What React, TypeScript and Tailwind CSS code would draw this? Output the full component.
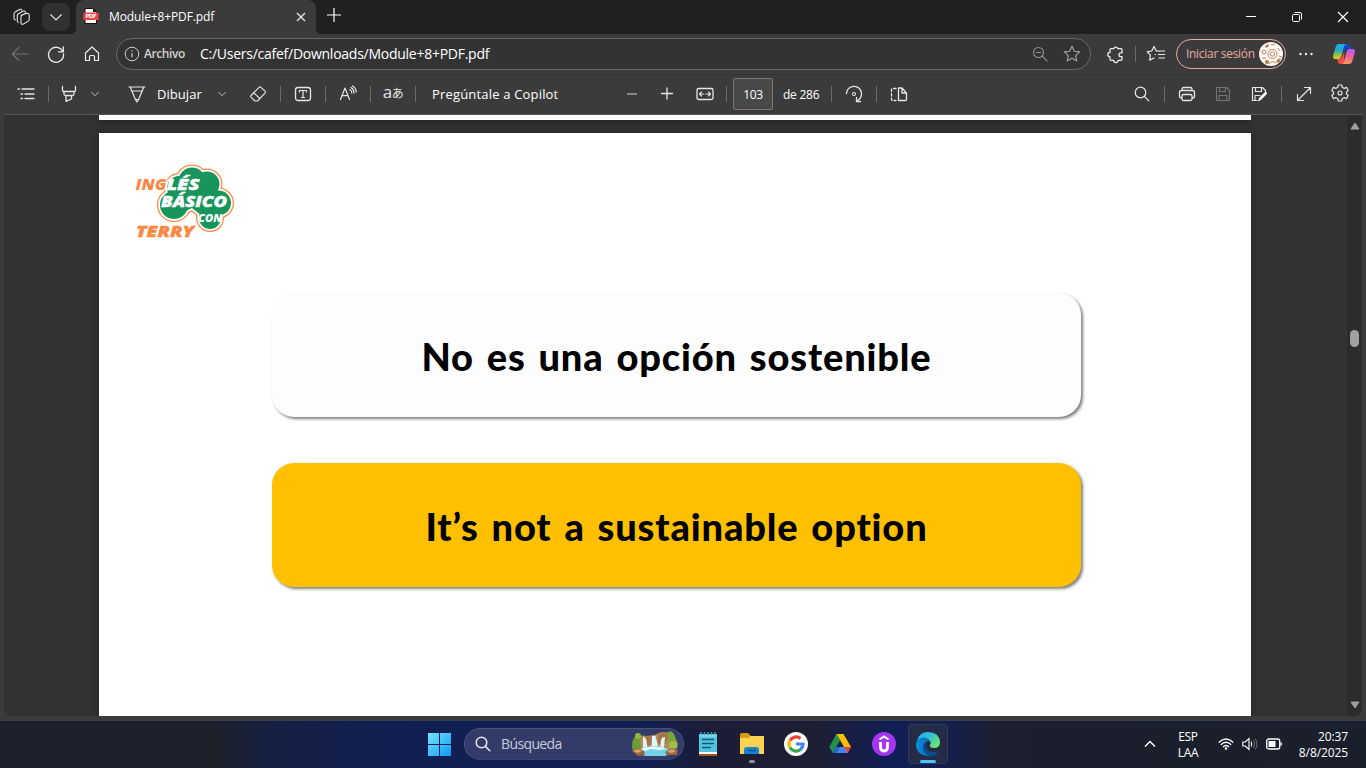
import React from "react";

type IconProps = { children: React.ReactNode; className?: string; box?: string };

function Icon({ children, className = "", box = "0 0 20 20" }: IconProps) {
  return (
    <svg viewBox={box} fill="none" stroke="currentColor" strokeWidth="1.1" strokeLinecap="round" strokeLinejoin="round" className={`block h-5 w-5 shrink-0 ${className}`}>
      {children}
    </svg>
  );
}

function Sep({ className = "ml-3" }: { className?: string }) {
  return <div className={`h-4 w-px shrink-0 bg-[#6b6b6b] ${className}`} />;
}

function Chevron({ className = "" }: { className?: string }) {
  return (
    <svg viewBox="0 0 10 10" fill="none" stroke="currentColor" strokeWidth="1" className={`block h-2.5 w-2.5 shrink-0 text-[#c4c4c4] ${className}`}>
      <path d="M1.5 3.2 5 6.7 8.500 3.200" />
    </svg>
  );
}

function TitleBar() {
  return (
    <div className="flex h-[34px] shrink-0 items-center bg-[#202020] text-white">
      <Icon className="ml-3 text-[#e6e6e6]">
        <path d="M9 8.200 14.200 6.500q3-.7 3 1.800v4.200q0 1-1 1.600L11.500 17q-2.500 1-2.500-1.200V9.800q0-1 1-1.600l4-2.200" />
        <path d="M6.500 15.500q-1.200-.2-1.200-1.800V8.500q0-1 1-1.700l4.700-2.600q2-.8 2.300 1" />
        <path d="M3.500 13Q2 12.800 2 11V6.800q0-1 1-1.700L7.500 2.500q1.800-.8 2.300.8" />
      </Icon>
      <div className="ml-2.5 flex h-7 w-7 items-center justify-center rounded-lg bg-[#313131]">
        <svg viewBox="0 0 14 14" className="h-3.5 w-3.5" fill="none" stroke="#e6e6e6" strokeWidth="1.2"><path d="m1.500 4.500 5.500 5.500 5.500-5.500" /></svg>
      </div>
      <svg viewBox="0 0 6 6" className="h-1.5 w-1.5 self-end"><path d="M0 6Q6 6 6 0V6Z" fill="#3b3b3b" /></svg>
      <div className="flex h-[34px] w-[240px] items-center rounded-t-lg bg-[#3b3b3b]">
        <svg viewBox="0 0 16 16" className="-mt-0.5 ml-[7px] h-4 w-4">
          <path d="M2 .5h8.500l3 3V15.500H2Z" fill="#fff" stroke="#111" />
          <path d="M10 .5v3.500h3.500Z" fill="#111" />
          <rect x=".5" y="4.500" width="15" height="7.500" rx=".6" fill="#f04346" />
          <text x="8" y="10.400" textAnchor="middle" fontSize="5.500" fontWeight="700" fontFamily="DejaVu Sans" fill="#fff" textLength="11">PDF</text>
        </svg>
        <span className="ml-[10px] w-[170px] whitespace-nowrap text-[12px] leading-4 tracking-[-0.12px]">Module+8+PDF.pdf</span>
        <svg viewBox="0 0 12 12" className="-mt-px ml-[16px] h-3 w-3" stroke="#e8e8e8" strokeWidth="1.300"><path d="m2 2 8 8M10 2l-8 8" /></svg>
      </div>
      <svg viewBox="0 0 6 6" className="h-1.5 w-1.5 self-end"><path d="M6 6Q0 6 0 0V6Z" fill="#3b3b3b" /></svg>
      <svg viewBox="0 0 14 14" className="-mt-1 ml-[5px] h-3.5 w-3.5" stroke="#fff" strokeWidth="1.200"><path d="M7 0v14M0 7h14" /></svg>
      <div className="ml-auto flex items-center">
        <svg viewBox="0 0 12 12" className="mr-[34px] h-3 w-3" stroke="#fff"><path d="M1 5.500h10" /></svg>
        <svg viewBox="0 0 12 12" className="mr-[34px] h-3 w-3" fill="none" stroke="#fff"><rect x="1.500" y="3.500" width="7" height="7" rx="1" /><path d="M3.500 1.500H9a1.500 1.500 0 0 1 1.500 1.500v5.500" /></svg>
        <svg viewBox="0 0 12 12" className="mr-[17px] h-3 w-3" stroke="#fff" strokeWidth="1.200"><path d="m1 1 10 10M11 1 1 11" /></svg>
      </div>
    </div>
  );
}

function CopilotLogo() {
  return (
    <svg viewBox="0 0 24 24" className="ml-4 h-6 w-6 shrink-0">
      <defs>
        <linearGradient id="cpA" x1="0" y1="0" x2="0" y2="1"><stop offset="0" stopColor="#18b4f3" /><stop offset=".4" stopColor="#27a5c8" /><stop offset=".75" stopColor="#8dc63f" /><stop offset="1" stopColor="#f5cf1e" /></linearGradient>
        <linearGradient id="cpB" x1=".6" y1="0" x2=".4" y2="1"><stop offset="0" stopColor="#b35df5" /><stop offset=".5" stopColor="#ef5f9c" /><stop offset="1" stopColor="#fb9a55" /></linearGradient>
      </defs>
      <path d="M10 2h5.500q2 0 2.600 2l1 3.500h-4.500q-2.500 0-3 2.500Z" fill="#1647c8" />
      <path d="M6.500 2H14q-1.500.4-2 2.500L9.500 14q-.8 3-3.500 3H3.500Q.4 17 1.200 13.500L3.600 5Q4.400 2 6.500 2Z" fill="url(#cpA)" />
      <path d="M12 22H8.500q-2 0-2.600-2L5 17h2q2.500 0 3.300-3l2-4Z" fill="#f34a4e" />
      <path d="M17.500 22H10q1.500-.4 2-2.500l2.500-9.500q.8-3 3.500-3h2.500q3.100 0 2.300 3.500L20.400 19q-.8 3-2.900 3Z" fill="url(#cpB)" />
    </svg>
  );
}

function NavBar() {
  return (
    <div className="flex h-10 shrink-0 items-center bg-[#3b3b3b] text-[#ededed]">
      <Icon className="ml-2.5 text-[#737373]"><path d="M18 10H2.500M9 3.500 2.300 10 9 16.500" /></Icon>
      <Icon className="ml-4"><path d="M16.800 7.500A7.500 7.500 0 1 0 17.500 10M17.300 3v4.800h-4.800" strokeWidth="1.300" /></Icon>
      <Icon className="ml-4"><path d="M3.500 9 10 3l6.500 6v7.500h-4v-4q0-1-1-1h-3q-1 0-1 1v4h-4Z" strokeWidth="1.200" /></Icon>
      <div className="ml-[14px] flex h-8 w-[975px] shrink-0 items-center rounded-full border border-[#686868] bg-[#333333]">
        <svg viewBox="0 0 16 16" className="ml-[7px] h-4 w-4" fill="none" stroke="#d0d0d0"><circle cx="8" cy="8" r="6.800" /><path d="M8 7.200v4M8 4.500v1.200" strokeWidth="1.200" /></svg>
        <span className="ml-1 w-[42px] whitespace-nowrap text-[12px] font-semibold leading-4 tracking-[-0.4px] text-[#d0d0d0]">Archivo</span>
        <span className="ml-[14px] whitespace-nowrap text-[14px] leading-5 tracking-[-0.26px] text-white">C:/Users/cafef/Downloads/Module+8+PDF.pdf</span>
        <Icon className="ml-auto mr-3 text-[#929292]"><circle cx="8.500" cy="8.500" r="5" /><path d="m12.200 12.200 4.800 4.800M6.200 8.500h4.600" /></Icon>
        <Icon className="mr-2 text-[#a5a5a5]"><path d="m10 2.200 2.300 5 5.400.7-4 3.700 1 5.400-4.700-2.700L5.300 17l1-5.400-4-3.700 5.400-.7Z" /></Icon>
      </div>
      <Icon className="ml-[14px]"><path d="M6 4.700h2.700a2.200 2.200 0 0 1 4.200 0H16q1 0 1 1v3.100h-1.200a1.900 1.900 0 0 0 0 3.800H17v2.700q0 1-1 1h-2.800a2.200 2.200 0 0 1-4.500 0H6q-1 0-1-1v-2.500a2.200 2.200 0 0 1 0-4.400V5.700q0-1 1-1Z" strokeWidth="1.300" /></Icon>
      <Sep className="ml-2.5" />
      <Icon className="ml-2.5"><path d="M13 7.200 10.300 7 8 2.500 5.700 7l-4.500.8 3.200 3.400-.7 5L8 14M12 7h6.500M12.500 10.500h6M13 14h5.500M9.500 10.500h-.2" strokeWidth="1.200" /></Icon>
      <div className="ml-2.5 flex h-[30px] w-[110px] shrink-0 items-center rounded-full border border-[#e8aaa6] text-[#e8aaa6]">
        <span className="ml-[9px] w-[69px] whitespace-nowrap text-[12px] leading-4 tracking-[-0.3px]">Iniciar sesión</span>
        <svg viewBox="0 0 24 24" className="ml-1 h-6 w-6 shrink-0">
          <circle cx="12" cy="12" r="12" fill="#fbf8f5" />
          <g fill="none" stroke="#bd8960" strokeWidth="1"><circle cx="13.500" cy="12" r="4.500" /><circle cx="13.500" cy="12" r="2.200" /><circle cx="5" cy="10" r="2" /><path d="M12 2q2 2 4 0M19 6l2 3M3 16q3-1 4 1M20 14l3 1M10 22q3-4 7-1" /></g>
          <g fill="#b87842"><circle cx="8" cy="20" r="2" /><path d="m6 4 3-2 1 2-3 2ZM19 17l3-1-2 5-3-1Z" /></g>
        </svg>
      </div>
      <Icon className="ml-2.5"><g fill="currentColor" stroke="none"><circle cx="4.500" cy="10" r="1.200" /><circle cx="10" cy="10" r="1.200" /><circle cx="15.500" cy="10" r="1.200" /></g></Icon>
      <CopilotLogo />
    </div>
  );
}

function PdfToolbar() {
  return (
    <div className="flex h-[41px] shrink-0 items-center rounded-t-lg border-b border-t border-b-[#555555] border-t-[#343434] bg-[#3b3b3b] pb-px text-[14px] leading-5 text-[#e6e6e6]">
      <Icon className="ml-3"><path d="M6 5h12M9 10h9M9 14.500h9M2 5h1.500M5 10h1.500M5 14.500h1.500" strokeWidth="1.300" /></Icon>
      <Sep />
      <Icon className="ml-2.5"><path d="M3.500 2.500v4q0 1 1 1h11q1 0 1-1v-4M5 7.500V10q0 1.500 1.500 1.500h7Q15 11.500 15 10V7.500M7 11.500v5.800l5.500-2.300v-3.500" strokeWidth="1.300" /></Icon>
      <Chevron className="ml-[11px]" />
      <Icon className="ml-[27px]"><path d="M2 3h16M3.200 3l5.200 12.500h3.200L16.800 3M4.700 7h10.600M8.400 15.500 10 18l1.600-2.500" strokeWidth="1.200" /></Icon>
      <span className="ml-2.5 w-[45px] whitespace-nowrap text-[13px] tracking-[0.05px] text-white">Dibujar</span>
      <Chevron className="ml-[15px]" />
      <Icon className="ml-[21px]"><path d="M3 11.500 11 3.300q1-.9 2 0L17 7.200q.9 1 0 2L9.500 17H7l-4-3.800q-.8-.8 0-1.700ZM5.800 8.800l6 5.700" /></Icon>
      <Sep />
      <Icon className="ml-3"><rect x="2.500" y="3.500" width="15" height="13" rx="2.500" strokeWidth="1.300" /><path d="M6.500 8V6.500h7V8M10 6.500v7M8.500 13.500h3" strokeWidth="1.200" /></Icon>
      <Sep />
      <Icon className="ml-3"><path d="m2.500 15.500 4.500-11.500L11.500 15.500M4 11.700h6M11.800 5.500q2 1.300 2 3.500M13 3.500q2.800 1.700 3 5.500M14.500 2q3.500 2 3.700 6" strokeWidth="1.200" /></Icon>
      <Sep />
      <div className="ml-3 flex w-5 shrink-0 items-center justify-center whitespace-nowrap text-[17px] tracking-[-0.5px]"><span className="-mt-1">a</span><span className="text-[12px]">あ</span></div>
      <Sep />
      <span className="ml-4 w-[126px] whitespace-nowrap text-[13px] tracking-[0.18px] text-white">Pregúntale a Copilot</span>
      <Icon className="ml-16 text-[#b0b0b0]"><path d="M5 10h10" strokeLinecap="butt" strokeWidth="1.300" /></Icon>
      <Icon className="ml-[15px]"><path d="M4.500 9.500h11M10 4v11" strokeWidth="1.300" /></Icon>
      <Icon className="ml-[18px]"><rect x="2" y="4.500" width="16" height="11" rx="1.800" strokeWidth="1.300" /><path d="M4.500 10H9M11 10h4.500M6.500 8l-2 2 2 2M13.500 8l2 2-2 2" /></Icon>
      <Sep className="ml-[11px]" />
      <div className="ml-1.5 flex h-8 w-10 shrink-0 items-center justify-center rounded-xs border border-[#777777] bg-[#484848] pt-px text-[12px] tracking-[-0.4px] text-white">103</div>
      <span className="ml-2.5 w-9 whitespace-nowrap pt-px text-[12px] tracking-[-0.25px] text-white">de 286</span>
      <Sep />
      <Icon className="ml-3"><path d="M2.500 9.500a7.500 7.500 0 1 1 11.500 6.700M12.500 13.500v4h4" strokeWidth="1.300" /><circle cx="10" cy="10" r="1.500" /></Icon>
      <Sep />
      <Icon className="ml-3"><path d="M9.500 4v12.500h7q1 0 1-1V9l-4.500-5Zm3.500 0v5h4.500" strokeWidth="1.300" /><path d="M7 4.500H3.500q-1 0-1 1v10q0 1 1 1H7" strokeDasharray="2.500 2" strokeWidth="1.300" /></Icon>
      <Icon className="ml-auto"><circle cx="8.500" cy="8.500" r="5.300" strokeWidth="1.200" /><path d="m12.500 12.500 4.300 4.300" strokeWidth="1.200" /></Icon>
      <Sep />
      <Icon className="ml-3"><path d="M5 6.500V5q0-1.500 1.500-1.500h7Q15 3.500 15 5v1.500M5 14h-.5q-2 0-2-2V8.500q0-2 2-2h11q2 0 2 2V12q0 2-2 2H15M6.500 10.500h7Q15 10.500 15 12v3q0 1.500-1.500 1.500h-7Q5 16.500 5 15v-3q0-1.500 1.500-1.500Z" strokeWidth="1.300" /></Icon>
      <Icon className="ml-4 text-[#747474]"><path d="M3.500 3.500h10l3 3v9q0 1-1 1h-11q-1 0-1-1ZM6.500 3.500v4h6v-4M6 16.500v-5h8v5" /></Icon>
      <Icon className="ml-4"><path d="M8 16.500H3.500v-13h10l3 3v2M6.500 3.500v4h6v-4M6 16.500v-5h5" strokeWidth="1.200" /><path d="m9 17.500 1-3.500 6-6q2-.5 2.200 1.800l-6 6Z" fill="#fff" stroke="none" /></Icon>
      <Sep />
      <Icon className="ml-3"><path d="M3.500 16.500 16.500 3.500M10.500 3.500h6v6M3.500 10.500v6h6" strokeWidth="1.200" /></Icon>
      <Icon className="ml-4 mr-3 -mt-0.5"><path d="m8.300 2-.6 2.500-2 .9L3.500 4.300 1.800 7.500 3.500 9.200v1.600l-1.700 1.700 1.700 3.200 2.200-1.100 2 .9.600 2.500h3.400l.6-2.500 2-.9 2.200 1.100 1.700-3.200-1.700-1.700V9.200l1.700-1.700-1.700-3.200-2.200 1.100-2-.9-.6-2.500Z" strokeWidth="1.200" /><circle cx="10" cy="10" r="2" /></Icon>
    </div>
  );
}

function Clover() {
  return (
    <>
      <circle cx="72" cy="31" r="13.500" />
      <circle cx="87" cy="34" r="12.500" />
      <circle cx="98.500" cy="53" r="12.500" />
      <circle cx="59" cy="38" r="12" />
      <circle cx="54" cy="55" r="14" />
      <circle cx="90" cy="68" r="11" />
      <path d="M48 44 60 28 92 26 98 42 100 64 82 66 72 58 64 62Z" />
    </>
  );
}

function TerryLogo() {
  return (
    <svg viewBox="0 0 130 100" className="absolute left-[21px] top-[17px] h-[100px] w-[130px] overflow-visible" fontFamily="Open Sans, sans-serif" fontWeight="800" fontStyle="italic" strokeLinejoin="round">
      <g fill="#fb8842" stroke="#fb8842" strokeWidth="6"><Clover /></g>
      <g fill="#fff" stroke="#fff" strokeWidth="3.500"><Clover /></g>
      <g fill="#17955b"><Clover /></g>
      <text x="15.500" y="40" fontSize="15.500" textLength="31" lengthAdjust="spacingAndGlyphs" fill="#fb8842" stroke="#fff" strokeWidth="2" paintOrder="stroke">ING</text>
      <text x="46.500" y="40" fontSize="15.500" textLength="33" lengthAdjust="spacingAndGlyphs" fill="#fff" stroke="#fff" strokeWidth=".4">LÉS</text>
      <text x="41" y="56.500" fontSize="15.500" textLength="66" lengthAdjust="spacingAndGlyphs" fill="#fff" stroke="#fff" strokeWidth=".4">BÁSICO</text>
      <text x="78" y="72" fontSize="11" textLength="24" lengthAdjust="spacingAndGlyphs" fill="#fff">CON</text>
      <text x="16" y="87" fontSize="15.500" textLength="58" lengthAdjust="spacingAndGlyphs" fill="#fb8842" stroke="#fb8842" strokeWidth=".4">TERRY</text>
    </svg>
  );
}

function PdfView() {
  return (
    <div className="flex min-h-0 flex-1 overflow-hidden rounded-b-lg bg-[#323232]">
      <div className="ml-[95px] flex w-[1152px] shrink-0 flex-col">
        <div className="h-[5px] shrink-0 bg-white shadow-[0_2px_6px_#222]" />
        <div className="relative mt-[13px] flex flex-1 flex-col items-center bg-white pl-[3px] shadow-[0_0_6px_#222]">
          <TerryLogo />
          <div className="mt-[160px] flex h-[124px] w-[809px] shrink-0 items-center justify-center rounded-[22px] bg-[#fdfdfd] pt-[3px] font-['Lato'] text-[38px] font-black tracking-[0.85px] text-black shadow-[2px_2px_3px_rgba(0,0,0,0.5)] [word-spacing:3px]">
            <span className="whitespace-nowrap">No es una opción sostenible</span>
          </div>
          <div className="mt-[46px] flex h-[124px] w-[809px] shrink-0 items-center justify-center rounded-[22px] bg-[#ffc000] pt-[3px] font-['Lato'] text-[38px] font-black tracking-[0.85px] text-black shadow-[2px_2px_3px_rgba(0,0,0,0.5)] [word-spacing:3px]">
            <span className="whitespace-nowrap">It’s not a sustainable option</span>
          </div>
        </div>
      </div>
      <div className="ml-auto flex w-[15px] flex-col items-center bg-[#2c2c2c]">
        <svg viewBox="0 0 10 8" className="mt-[7px] h-2 w-2.5"><path d="M5 1 9 7H1Z" fill="#a0a0a0" stroke="#a0a0a0" strokeLinejoin="round" /></svg>
        <div className="mt-[200px] h-[17px] w-[9px] rounded-full bg-[#a0a0a0]" />
        <svg viewBox="0 0 10 8" className="mb-[7px] mt-auto h-2 w-2.5"><path d="M5 7 9 1H1Z" fill="#a0a0a0" stroke="#a0a0a0" strokeLinejoin="round" /></svg>
      </div>
    </div>
  );
}

function Waterfall() {
  return (
    <svg viewBox="0 0 48 26" className="h-[26px] w-12">
      <path d="M6 8q3-5 10-3l7-1 8-3q8 0 12 5v13H6Z" fill="#b98956" />
      <path d="m14 6 7-1 2 8-8 2ZM27 5l5-4 6 4-3 8h-8Z" fill="#a47449" />
      <path d="M2 9q3-7 8-3l-1 6 2 7-9 1q-2-5 0-11Z" fill="#6f9c32" /><circle cx="7" cy="5" r="3" fill="#91b940" />
      <path d="M36 2q4-4 7 1l4 10-1 5-7-2Z" fill="#79a436" /><circle cx="42" cy="14" r="4" fill="#a5bd4a" />
      <path d="M12 6q3 0 3.500 4l1 7h-4.500ZM21 5h3.500l3 12h-7ZM34 6q-4 0-4 4l-1 7h4Z" fill="#dff4fb" />
      <path d="M8 19q14-8 31 0l-4 6H13Z" fill="#70d1e8" /><path d="M10 18q12-5 26 0l-8 1-8-1-6 2Z" fill="#effbff" />
      <path d="m1 20 6-3 6 3 1 4-7 1ZM34 21l7-4 6 2-1 5H36Z" fill="#9c633f" /><path d="m2 20 5-2 4 2-4 2ZM36 21l5-3 4 2-4 2Z" fill="#d7a66e" />
    </svg>
  );
}

function TaskBar() {
  return (
    <div className="flex h-12 shrink-0 items-center border-t border-[#363d52] bg-[linear-gradient(90deg,#1b202a_0%,#1b202b_16%,#152044_20%,#111f52_30%,#111f52_47%,#1b1d35_52%,#1e1f35_60%,#111e54_65%,#132050_69%,#1b1f2e_73%,#1a202b_100%)] pb-px text-white">
      <svg viewBox="0 0 24 24" className="ml-[427px] h-6 w-6">
        <defs><linearGradient id="win" x1="0" y1="0" x2="1" y2="1"><stop offset="0" stopColor="#79e5ff" /><stop offset="1" stopColor="#0c98f3" /></linearGradient></defs>
        <path d="M1 1h11v11H1ZM13 1h11v11H13ZM1 13h11v11H1ZM13 13h11v11H13Z" fill="url(#win)" />
      </svg>
      <div className="ml-[13px] flex h-8 w-[220px] shrink-0 items-center rounded-full border border-[#48517c] border-b-[#384270] bg-[#333c69]">
        <svg viewBox="0 0 16 16" className="ml-2.5 h-4 w-4" fill="none" stroke="#e4e6ef" strokeWidth="1.500" strokeLinecap="round"><circle cx="6.500" cy="6.500" r="5.300" /><path d="m10.400 10.400 4.400 4.400" /></svg>
        <span className="ml-2.5 whitespace-nowrap text-[14px] leading-5 tracking-[-0.62px] text-[#c6cada]">Búsqueda</span>
        <div className="ml-auto mr-1"><Waterfall /></div>
      </div>
      <svg viewBox="0 0 24 26" className="ml-3 h-[26px] w-6">
        <path d="M3 3h18v18H3Z" fill="#54c3dd" /><path d="M3 21h18v2H3Z" fill="#fff" /><path d="M3 23h18v2H3Z" fill="#a65322" /><path d="M3 3h18v3H3Z" fill="#78d6e8" />
        <path d="M5 1v3M8.500 1v3M12 1v3M15.500 1v3M19 1v3" stroke="#2d9db9" strokeWidth="1.500" /><path d="M6 8.500h12M6 12.500h12M6 16.500h9" stroke="#075d78" strokeWidth="1.500" />
      </svg>
      <div className="ml-[19px] flex h-[46px] w-[26px] flex-col items-center">
        <svg viewBox="0 0 26 24" className="mt-[11px] h-6 w-[26px] shrink-0">
          <path d="M1 3q0-2 2-2h6l3 3h12q1 0 1 1v17H1Z" fill="#d99c0d" /><path d="M1 6h8l3-2h13v18H1Z" fill="#ffd251" /><path d="M5 22v-4q0-3 3-3h9q3 0 3 3v4Z" fill="#1683d0" /><path d="M9 18.500h8" stroke="#08579c" strokeWidth="1.500" />
        </svg>
        <div className="mt-1 h-[3px] w-1.5 shrink-0 rounded-full bg-[#92949d]" />
      </div>
      <svg viewBox="0 0 24 24" className="ml-[19px] h-6 w-6">
        <circle cx="12" cy="12" r="12" fill="#fff" /><g fill="none" strokeWidth="3.200"><path d="M6 8.500A7 7 0 0 1 16.500 6.500" stroke="#ea4335" /><path d="M6 8.500a7 7 0 0 0 0 7" stroke="#fbbc05" /><path d="M6 15.500a7 7 0 0 0 10.300 2.200" stroke="#34a853" /><path d="M12 12h7q0 3.500-2.700 5.700" stroke="#4285f4" /></g>
      </svg>
      <svg viewBox="0 0 24 24" className="ml-5 h-6 w-6">
        <path d="M8.500 2h7L12 8 5 20 1.500 15Z" fill="#34a853" /><path d="M8.500 2h7L23 15h-7Z" fill="#fbbc04" /><path d="M8 15h15l-3.500 6h-14Z" fill="#4285f4" /><path d="M16 15h7l-3.500 6Z" fill="#ea4335" /><path d="M8 15 5 21l-3.500-6L8.500 2l3.500 6Z" fill="#20914b" /><path d="m5 21 3.300-6H12l-3 6Z" fill="#2668cf" />
      </svg>
      <svg viewBox="0 0 24 24" className="ml-5 h-6 w-6"><circle cx="12" cy="12" r="12" fill="#a435f0" /><path d="m7.500 7.500 4.500-3 4.500 3" stroke="#fff" strokeWidth="2" fill="none" /><path d="M8.500 10v5q0 4 3.500 4t3.500-4v-5" fill="none" stroke="#fff" strokeWidth="2.800" /></svg>
      <div className="ml-[12px] flex h-10 w-10 flex-col items-center rounded border border-[#313a59] bg-[#252c48]">
        <svg viewBox="0 0 24 24" className="mt-[7px] h-6 w-6 shrink-0">
          <defs><linearGradient id="ed" x1="0" y1="0" x2="1" y2=".6"><stop offset="0" stopColor="#20a7ed" /><stop offset=".55" stopColor="#35c4cf" /><stop offset="1" stopColor="#69e66d" /></linearGradient><linearGradient id="edb"><stop stopColor="#0b8ee0" /><stop offset="1" stopColor="#0755a4" /></linearGradient></defs>
          <path d="M1 9Q3 0 12 0q11 0 12 10 0 6-6 6-5 0-4-3 2-4-2-5Q5 5 1 9Z" fill="url(#ed)" /><path d="M0 12Q1 5 8 5.500q5 .5 6 4-6-1-5 5 1 5 8 6 2 0 5-1-4 5-10 4.500Q0 23 0 12Z" fill="url(#edb)" /><path d="M8 11q-4 9 6 13 6 0 8.500-5-6 3-10.500 0-3.500-3-2-8Z" fill="#094c91" />
        </svg>
        <div className="mt-[4px] h-[3px] w-4 rounded-full bg-[#4cc2ff]" />
      </div>
      <svg viewBox="0 0 12 12" className="ml-auto h-3 w-3 shrink-0" fill="none" stroke="#fff" strokeWidth="1.400"><path d="m1 8.500 5-5 5 5" /></svg>
      <div className="ml-[20px] flex w-[24px] flex-col items-center pt-px text-[12px] leading-4 tracking-[-0.35px]"><span>ESP</span><span>LAA</span></div>
      <svg viewBox="0 0 16 14" className="ml-[18px] h-3.5 w-4 shrink-0" fill="none" stroke="#fff" strokeWidth="1.300"><path d="M.7 5.500q7.300-7 14.600 0M2.800 7.800q5.200-5 10.400 0M5 10q3-3 6 0" /><circle cx="8" cy="11.500" r="1.300" fill="#fff" stroke="none" /></svg>
      <svg viewBox="0 0 16 14" className="ml-2 h-3.5 w-4 shrink-0" fill="none" stroke="#fff" strokeWidth="1.100"><path d="M.8 5h2.500L7 1.500v11L3.300 9H.8Z" /><path d="M9 4.500q1.500 2.500 0 5" /><path d="M11 3q3 4 0 8M13 1.500q4 5.500 0 11" stroke="#646a75" /></svg>
      <svg viewBox="0 0 16 12" className="ml-2 h-3 w-4 shrink-0"><rect x=".7" y="1" width="13" height="10" rx="2" fill="none" stroke="#fff" strokeWidth="1.300" /><rect x="2.500" y="3" width="7" height="6" rx=".5" fill="#fff" /><path d="M14.500 4q1.500 0 1.500 2t-1.500 2Z" fill="#fff" /></svg>
      <div className="ml-4 mr-[18px] flex w-[50px] flex-col items-end whitespace-nowrap pt-px text-[12px] leading-4 tracking-[-0.1px]"><span>20:37</span><span>8/8/2025</span></div>
    </div>
  );
}

export default function App() {
  return (
    <div className="flex h-[768px] w-[1366px] flex-col overflow-hidden bg-[#3b3b3b] font-['Open_Sans','Noto_Sans_CJK_JP',sans-serif]">
      <TitleBar />
      <NavBar />
      <div className="mx-1 mb-1 flex min-h-0 flex-1 flex-col">
        <PdfToolbar />
        <PdfView />
      </div>
      <TaskBar />
    </div>
  );
}
